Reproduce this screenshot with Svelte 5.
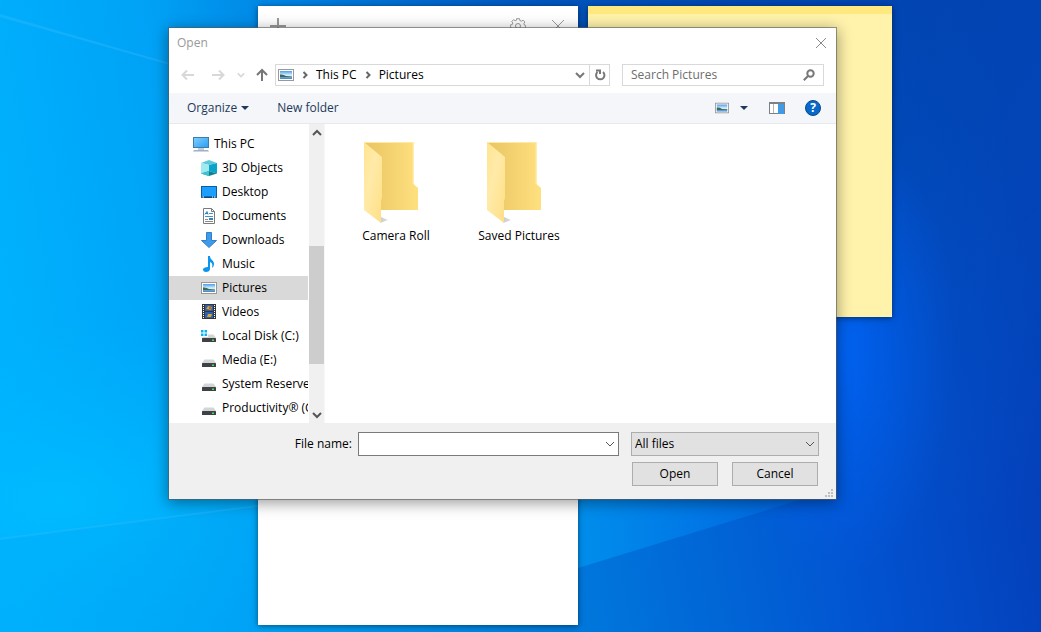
<script>
  // places in the navigation pane
  const places = [
    { name: 'This PC', icon: 'pc', root: true },
    { name: '3D Objects', icon: 'cube' },
    { name: 'Desktop', icon: 'desktop' },
    { name: 'Documents', icon: 'document' },
    { name: 'Downloads', icon: 'download' },
    { name: 'Music', icon: 'music' },
    { name: 'Pictures', icon: 'picture' },
    { name: 'Videos', icon: 'video' },
    { name: 'Local Disk (C:)', icon: 'windisk' },
    { name: 'Media (E:)', icon: 'disk' },
    { name: 'System Reserved (F:)', icon: 'disk' },
    { name: 'Productivity® (G:)', icon: 'disk' }
  ];
  const folders = ['Camera Roll', 'Saved Pictures'];

  let selected = $state('Pictures');
  let search = $state('');
  let fileName = $state('');
  let fileType = $state('All files');
</script>

{#snippet picture()}
  <rect x=".5" y="2.500" width="15" height="11" fill="#fff" stroke="#999" />
  <rect x="2" y="4" width="12" height="8" fill="url(#sky)" />
  <path d="M2 7.500q3-.5 6 1.500l6 .5v1H2z" fill="#3c6b57" />
  <path d="M2 10.500h12V12H2z" fill="#4f8fd0" />
{/snippet}

{#snippet disk()}
  <path d="M3.500 6.500h9L15 10H1z" fill="#d3d5d6" />
  <rect x="1" y="10" width="14" height="4" rx=".5" fill="#3f4245" />
  <rect x="11" y="11.500" width="2" height="1.500" fill="#3fe046" />
{/snippet}

{#snippet glyph(name)}
  <svg class="glyph" viewBox="0 0 16 16" aria-hidden="true">
    {#if name === 'pc'}
      <rect x=".5" y="1.500" width="15" height="10" fill="url(#screen)" stroke="#3d7dae" />
      <path d="M5 12.500h6v1H5z" fill="#7da0bd" />
      <path d="M1 14h14l1 1.500H0z" fill="#9fb0c4" />
    {:else if name === 'cube'}
      <path d="M0 3l8-3 8 3-8 2z" fill="#5fc9d6" />
      <path d="M0 3l8 2v6l-8 2.500z" fill="#9feaf0" />
      <path d="M16 3L8 5v6l8 2.500z" fill="#0aa3cc" />
      <path d="M0 13.500L8 11l8 2.500L8 16z" fill="#14808c" />
      <path d="M8 11v5l-8-2.500z" fill="#3cc5cf" />
    {:else if name === 'desktop'}
      <rect x=".5" y="2.500" width="15" height="11" fill="#1a9fff" stroke="#0b5f9e" />
      <path d="M1 12.500h14v1H1z" fill="#08395f" />
      <path d="M1.500 13h1.500M11 13h1M13 13h1.500" stroke="#fff" />
    {:else if name === 'document'}
      <path d="M2.500.5h8l3 3v12h-11z" fill="#fff" stroke="#7b7b7b" />
      <path d="M10.500.5v3h3" fill="none" stroke="#7b7b7b" />
      <path d="M4 6.500l2-3 1 3M4 5.500h3" fill="none" stroke="#2384c6" />
      <path d="M8 5.500h4M4 8.500h8" stroke="#3f94cf" />
      <path d="M4 11.500h3M4 13.500h8" stroke="#8a8a8a" />
      <rect x="8" y="10" width="4" height="2" fill="#3f7fa8" />
    {:else if name === 'download'}
      <path d="M5.500.5h5v8h5L8 15.500.5 8.500h5z" fill="#3e9bea" stroke="#2f7fca" />
    {:else if name === 'music'}
      <path d="M7 0h2c0 4 4 4 4 8 0 2-1 3-2 4 1-4 0-5-2-6v7c0 2-2 3-4 3s-3-1-3-2.500S4 11 7 11z" fill="#0c95ec" />
    {:else if name === 'picture'}
      {@render picture()}
    {:else if name === 'video'}
      <rect x="1" width="14" height="15" fill="#34363a" />
      <rect x="4" y="1" width="8" height="6" fill="#2b5fb0" />
      <rect x="4" y="8" width="8" height="6" fill="#2b5fb0" />
      <path d="M2.500 1v14M13.500 1v14" stroke="#fff" stroke-dasharray="1 1" />
      <path d="M5 5l2-3 4 1-1 3z" fill="#d9a530" />
      <path d="M6 13l1-3h4l-1 3z" fill="#d9a530" />
      <circle cx="9" cy="4" r="1" fill="#c33b33" />
    {:else if name === 'windisk'}
      {@render disk()}
      <path d="M0 2h7v7H0z" fill="#fff" />
      <path d="M0 2h2.500v2.500H0zM3.500 2H6v2.500H3.500zM0 5.500h2.500V8H0zM3.500 5.500H6V8H3.500z" fill="#0bb2f2" />
    {:else}
      <g transform="translate(0 1)">{@render disk()}</g>
    {/if}
  </svg>
{/snippet}

{#snippet chevron()}
  <svg class="chevron" viewBox="0 0 10 10" aria-hidden="true"><path d="M1 3l4 4 4-4" /></svg>
{/snippet}

<main class="desktop">
  <svg class="wallpaper" viewBox="0 0 1041 632" preserveAspectRatio="none" aria-hidden="true">
    <defs>
      <linearGradient id="base" gradientUnits="userSpaceOnUse" x1="0" y1="500" x2="1041" y2="320">
        <stop offset="0" stop-color="#00b4ff" />
        <stop offset=".22" stop-color="#00a2f6" />
        <stop offset=".52" stop-color="#0078dc" />
        <stop offset=".8" stop-color="#0252d0" />
        <stop offset="1" stop-color="#043db6" />
      </linearGradient>
      <radialGradient id="top" gradientUnits="userSpaceOnUse" cx="760" cy="-60" r="620">
        <stop offset="0" stop-color="#0040a4" stop-opacity=".8" />
        <stop offset=".4" stop-color="#0048b0" stop-opacity=".6" />
        <stop offset="1" stop-color="#0060d0" stop-opacity="0" />
      </radialGradient>
      <linearGradient id="beam" gradientUnits="userSpaceOnUse" x1="578" y1="0" x2="806" y2="0">
        <stop offset="0" stop-color="#0094f0" stop-opacity=".8" />
        <stop offset="1" stop-color="#0074f0" stop-opacity=".4" />
      </linearGradient>
      <radialGradient id="glow">
        <stop offset="0" stop-color="#0068ff" stop-opacity=".8" />
        <stop offset=".5" stop-color="#0064f8" stop-opacity=".4" />
        <stop offset="1" stop-color="#0060f0" stop-opacity="0" />
      </radialGradient>
      <radialGradient id="corner">
        <stop offset="0" stop-color="#00bcff" stop-opacity=".9" />
        <stop offset="1" stop-color="#00b0ff" stop-opacity="0" />
      </radialGradient>
      <linearGradient id="sky" x1="0" y1="0" x2="0" y2="1">
        <stop offset="0" stop-color="#4d9cec" />
        <stop offset=".5" stop-color="#d4edfa" />
      </linearGradient>
      <linearGradient id="screen" x1="0" y1="0" x2="1" y2="1">
        <stop offset="0" stop-color="#7fd0ff" />
        <stop offset="1" stop-color="#2b9df0" />
      </linearGradient>
      <linearGradient id="folder-back">
        <stop offset=".1" stop-color="#ebc765" />
        <stop offset="1" stop-color="#ffe07f" />
      </linearGradient>
      <linearGradient id="folder-front" x1="0" y1="0" x2="1" y2="1">
        <stop offset="0" stop-color="#ffe491" />
        <stop offset=".4" stop-color="#ffeaa8" />
        <stop offset="1" stop-color="#ffdf85" />
      </linearGradient>
      <linearGradient id="folder-shadow">
        <stop offset="0" stop-color="#ccc" />
        <stop offset="1" stop-color="#fff" stop-opacity="0" />
      </linearGradient>
    </defs>
    <rect width="1041" height="632" fill="url(#base)" />
    <rect width="1041" height="632" fill="url(#top)" />
    <ellipse cx="60" cy="500" rx="320" ry="190" fill="url(#corner)" />
    <ellipse cx="836" cy="350" rx="120" ry="230" fill="url(#glow)" />
    <path d="M578 568L806 498H578z" fill="url(#beam)" />
    <path d="M0 14L170 63v2L0 17zM0 538L258 505v2L0 540z" fill="#4cc4ff" opacity=".25" />
    <path d="M0 539L258 506v126H0z" fill="#0098e8" opacity=".15" />
  </svg>

  <section class="window notes" aria-label="Notes list">
    <header>
      <button aria-label="New note"><svg viewBox="0 0 16 16"><path d="M8 0v16M0 8h16" stroke-width="2" /></svg></button>
      <span class="spacer"></span>
      <button aria-label="Settings">
        <svg viewBox="0 0 16 16">
          <path d="M6.500.7h3l.4 1.900 1.500.6 1.700-1 1.700 1.700-1 1.700.6 1.500 1.300.4v3l-1.900.4-.6 1.500 1 1.700-1.700 1.200-1.500-1-1.500.6-.4 1H6.500l-.4-1.500-1.500-.6-1.700 1-1.700-1.700 1-1.700-.6-1.500-1.300-.4v-2.500l1.900-.4.6-1.500-1-1.700 1.700-1.700 1.700 1 1.500-.6z" />
          <circle cx="8" cy="8" r="2.500" />
        </svg>
      </button>
      <button aria-label="Close notes"><svg viewBox="0 0 16 16"><path d="M2 2l12 12M14 2L2 14" /></svg></button>
    </header>
  </section>

  <section class="window sticky" aria-label="Note"></section>

  <div class="window dialog" role="dialog" aria-labelledby="dialog-title">
    <header class="titlebar">
      <span id="dialog-title">Open</span>
      <button class="close" aria-label="Close"><svg viewBox="0 0 12 12"><path d="M1 1l10 10M11 1L1 11" /></svg></button>
    </header>

    <nav class="address-row" aria-label="Address">
      <div class="history">
        <button aria-label="Back" disabled><svg viewBox="0 0 14 14"><path d="M13 7H2M6 2.500L1.500 7 6 11.500" /></svg></button>
        <button aria-label="Forward" disabled><svg viewBox="0 0 14 14"><path d="M1 7h11M8 2.500L12.500 7 8 11.500" /></svg></button>
        <button class="recent" aria-label="Recent locations" disabled>{@render chevron()}</button>
        <button aria-label="Up"><svg viewBox="0 0 14 14"><path d="M7 13V2M2 7l5-5 5 5" /></svg></button>
      </div>
      <div class="address">
        <svg class="glyph" viewBox="0 0 16 16" aria-hidden="true">{@render picture()}</svg>
        <svg class="sep" viewBox="0 0 6 8" aria-hidden="true"><path d="M1.500 1l3 3-3 3" /></svg>
        <button>This PC</button>
        <svg class="sep" viewBox="0 0 6 8" aria-hidden="true"><path d="M1.500 1l3 3-3 3" /></svg>
        <button>Pictures</button>
        <span class="spacer"></span>
        <button class="drop" aria-label="Previous locations">{@render chevron()}</button>
        <button class="refresh" aria-label="Refresh">
          <svg viewBox="0 0 12 12"><path d="M3.500 3A4.200 4.200 0 1 0 9 3M2 1.500h4v3.500" /></svg>
        </button>
      </div>
      <div class="search">
        <input type="text" aria-label="Search Pictures" placeholder="Search Pictures" bind:value={search} />
        <svg viewBox="0 0 12 12" aria-hidden="true"><circle cx="7.500" cy="4.500" r="3.200" /><path d="M5 7L.8 11.200" /></svg>
      </div>
    </nav>

    <div class="toolbar">
      <button>Organize <i class="caret"></i></button>
      <button>New folder</button>
      <span class="spacer"></span>
      <button class="view" aria-label="Change your view">
        <svg class="thumb-icon" viewBox="0 0 16 16" aria-hidden="true">{@render picture()}</svg>
        <i class="caret"></i>
      </button>
      <button aria-label="Show the preview pane">
        <svg class="pane-icon" viewBox="0 0 16 12">
          <rect x=".5" y=".5" width="15" height="11" fill="#fff" stroke="#7c8186" />
          <path d="M0 1h16" stroke="#7c8186" stroke-width="2" />
          <path d="M4.500 2v9" stroke="#b4b4b4" />
          <rect x="9" y="2" width="6" height="10" fill="#3f9be6" />
        </svg>
      </button>
      <button class="help" aria-label="Get help">?</button>
    </div>

    <div class="browser">
      <ul class="places">
        {#each places as place}
          <li>
            <button
              class:root={place.root}
              class:selected={selected === place.name}
              onclick={() => (selected = place.name)}
            >
              {@render glyph(place.icon)}<span>{place.name}</span>
            </button>
          </li>
        {/each}
      </ul>
      <div class="scrollbar">
        <button class="up" aria-label="Scroll up">{@render chevron()}</button>
        <div class="track"><div class="thumb"></div></div>
        <button aria-label="Scroll down">{@render chevron()}</button>
      </div>
      <div class="files">
        {#each folders as folder}
          <button class="folder">
            <svg viewBox="0 0 64 84" aria-hidden="true">
              <path d="M16 82l8-3-7-3zM53 69l8-3-7-1z" fill="url(#folder-shadow)" />
              <path d="M0 1h49.500v42l4.500 4v22H17z" fill="url(#folder-back)" />
              <path d="M0 1.500h49v42" fill="none" stroke="#ffe9a4" />
              <path d="M0 1l18 15v41l-1 3v22L0 69z" fill="url(#folder-front)" />
            </svg>
            <span>{folder}</span>
          </button>
        {/each}
      </div>
    </div>

    <footer>
      <label for="file-name">File name:</label>
      <div class="combo">
        <input id="file-name" type="text" bind:value={fileName} />
        <button aria-label="Recent file names">{@render chevron()}</button>
      </div>
      <div class="filter">
        <select aria-label="File type" bind:value={fileType}>
          <option>All files</option>
        </select>
        {@render chevron()}
      </div>
      <div class="actions">
        <button>Open</button>
        <button>Cancel</button>
      </div>
      <svg class="grip" viewBox="0 0 8 8" aria-hidden="true">
        <path d="M6 0h2v2H6zM3 3h2v2H3zM6 3h2v2H6zM0 6h2v2H0zM3 6h2v2H3zM6 6h2v2H6z" />
      </svg>
    </footer>
  </div>
</main>

<style>
  :global(body) { margin: 0; background: #007ce0; }

  .desktop {
    position: relative;
    min-height: 100vh;
    overflow: hidden;
    font: 12px/16px "Segoe UI", "Open Sans", "Noto Sans", sans-serif;
    color: #000;
  }
  .desktop * { box-sizing: border-box; }
  .wallpaper { position: absolute; inset: 0; width: 100%; height: 100%; }

  button, input, select { font: inherit; color: inherit; border-radius: 0; }
  button { display: flex; align-items: center; padding: 0; border: 0; background: none; white-space: nowrap; }
  svg { display: block; flex: none; }
  .spacer { flex: 1; }
  .glyph { width: 16px; height: 16px; }
  .chevron { width: 10px; height: 10px; fill: none; stroke: #555; }

  /* windows */
  .window { position: absolute; }
  .notes {
    left: 258px; top: 6px; width: 320px; height: 619px;
    background: #fff; box-shadow: 0 1px 6px rgba(0, 0, 0, .5);
  }
  .notes header { display: flex; gap: 24px; padding: 12px 12px; }
  .notes header svg { width: 16px; height: 16px; fill: none; stroke: #999; }
  .sticky {
    left: 588px; top: 6px; width: 304px; height: 311px;
    background: #fff2ab; border-top: 8px solid #ffe97f; box-shadow: 0 1px 6px rgba(0, 0, 0, .5);
  }
  .dialog {
    left: 168px; top: 27px; width: 669px;
    display: flex; flex-direction: column;
    background: #fff; border: 1px solid rgba(90, 90, 90, .6); background-clip: padding-box;
    box-shadow: 0 3px 14px rgba(0, 0, 0, .4);
  }

  .titlebar { display: flex; align-items: center; justify-content: space-between; height: 30px; padding: 0 9px 0 8px; color: #999; }
  .close svg { width: 12px; height: 12px; fill: none; stroke: #888; }

  .address-row { display: flex; align-items: center; padding: 6px 12px 7px; }
  .history { display: flex; align-items: center; gap: 16px; width: 94px; }
  .history svg { width: 14px; height: 14px; fill: none; stroke: #777; stroke-width: 2; }
  .history button:disabled svg { stroke: #d8d8d8; }
  .history .recent { margin: 0 -6px 0 -4px; }
  .history .recent svg { width: 8px; height: 8px; }
  .address { flex: 1; display: flex; align-items: center; height: 22px; margin-right: 12px; padding-left: 2px; border: 1px solid #d9d9d9; }
  .address .sep { width: 6px; height: 8px; margin: 0 8px; fill: none; stroke: #666; stroke-width: 2; }
  .address .drop { padding: 0 4px; }
  .address .drop svg { stroke: #777; stroke-width: 2; }
  .refresh { justify-content: center; width: 20px; height: 100%; border-left: 1px solid #d9d9d9; }
  .refresh svg { width: 12px; height: 12px; fill: none; stroke: #777; stroke-width: 2; }
  .search { display: flex; align-items: center; width: 202px; height: 22px; padding: 0 8px; border: 1px solid #d9d9d9; }
  .search input { flex: 1; min-width: 0; padding: 0; border: 0; outline: 0; background: none; }
  .search input::placeholder { color: #6d6d6d; opacity: 1; }
  .search svg { width: 12px; height: 12px; fill: none; stroke: #777; stroke-width: 2; }

  .toolbar {
    display: flex; align-items: center; height: 31px; padding: 0 15px 0 18px;
    background: #f4f6f9; border-bottom: 1px solid #e8e9ec; color: #1e395b;
  }
  .toolbar button + button { margin-left: 28px; }
  .caret { margin-left: 4px; border: 4px solid transparent; border-top-color: #1e395b; border-bottom: 0; }
  .toolbar .view + button { margin-left: 21px; }
  .thumb-icon { width: 14px; height: 14px; }
  .view .caret { margin-left: 11px; }
  .pane-icon { width: 16px; height: 12px; }
  .toolbar .help {
    justify-content: center; width: 16px; height: 16px; margin-left: 20px;
    border: 1px solid #074a91; border-radius: 50%; background: #0869c9; color: #fff; font-weight: 700;
  }

  .browser { display: flex; height: 299px; }
  .places { width: 139px; margin: 0; padding: 8px 0 0; overflow: hidden; list-style: none; }
  .places button { width: 100%; height: 24px; padding-left: 32px; gap: 5px; overflow: hidden; }
  .places .root { padding-left: 24px; }
  .places .selected { background: #d9d9d9; }
  .scrollbar { display: flex; flex-direction: column; width: 17px; padding-left: 1px; background: #f0f0f0 content-box; border-right: 1px solid #f7f7f7; }
  .scrollbar button { justify-content: center; height: 17px; }
  .scrollbar svg { stroke-width: 2; }
  .scrollbar .up svg { transform: scaleY(-1); }
  .track { flex: 1; padding-top: 105px; }
  .thumb { height: 118px; background: #cdcdcd; }
  .files { flex: 1; display: flex; align-items: flex-start; gap: 1px; padding: 17px 0 0 10px; }
  .folder { flex-direction: column; width: 122px; gap: 3px; }
  .folder svg { width: 64px; height: 84px; }

  footer {
    position: relative;
    display: grid; grid-template-columns: 1fr 261px 188px; align-items: center; gap: 6px 12px;
    padding: 9px 17px 13px 12px; background: #f0f0f0;
  }
  footer label { justify-self: end; margin-right: -6px; }
  .combo { display: flex; height: 24px; border: 1px solid #7a7a7a; background: #fff; }
  .combo input { flex: 1; min-width: 0; padding: 0 4px; border: 0; outline: 0; background: none; }
  .combo button { padding: 0 3px; }
  .filter { display: grid; align-items: center; }
  .filter select { grid-area: 1 / 1; appearance: none; width: 100%; height: 24px; padding: 0 20px 0 3px; border: 1px solid #adadad; background: #e1e1e1; }
  .filter .chevron { grid-area: 1 / 1; justify-self: end; margin-right: 4px; pointer-events: none; }
  .actions { grid-column: 3; display: flex; justify-content: space-between; padding: 0 1px; }
  .actions button { justify-content: center; width: 86px; height: 24px; border: 1px solid #adadad; background: #e1e1e1; }
  .grip { position: absolute; right: 3px; bottom: 2px; width: 8px; height: 8px; fill: #bfbfbf; }
</style>
